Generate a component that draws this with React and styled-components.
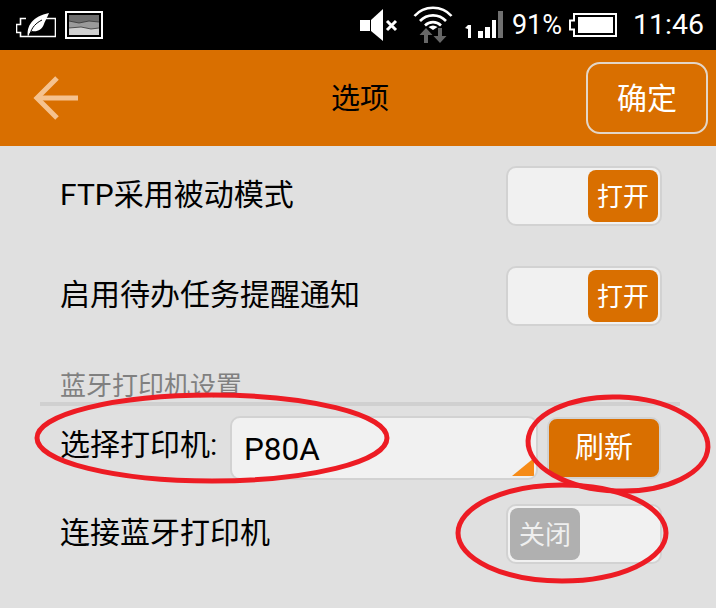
import styled, { createGlobalStyle } from "styled-components";

const GlobalStyle = createGlobalStyle`
  html, body {
    margin: 0;
    padding: 0;
    background: #e0e0e0;
  }
  * {
    box-sizing: border-box;
  }
`;

const ORANGE = "#d96f00";

const Page = styled.div`
  position: relative;
  width: 716px;
  height: 608px;
  overflow: hidden;
  background: #e0e0e0;
  font-family: Roboto, "Noto Sans CJK SC", sans-serif;
`;

const StatusBar = styled.div`
  display: flex;
  align-items: center;
  height: 50px;
  padding: 0 12px 0 16px;
  background: #000;
  color: #fff;
`;

const StatusLeft = styled.div`
  display: flex;
  align-items: center;
  gap: 9px;
  margin-right: auto;
`;

const StatusSlot = styled.div`
  display: flex;
  align-items: center;
  margin-left: ${(p) => p.$left}px;
`;

const StatusText = styled.span`
  font-size: ${(p) => p.$size}px;
  line-height: 50px;
  margin-left: ${(p) => p.$left}px;
`;

const Header = styled.header`
  display: grid;
  grid-template-columns: 1fr auto 1fr;
  align-items: center;
  height: 96px;
  padding: 0 8px;
  background: ${ORANGE};
`;

const BackSlot = styled.div`
  display: flex;
  margin-left: 25px;
`;

const HeaderTitle = styled.h1`
  margin: 0 0 4px 4px;
  font-size: 29px;
  font-weight: 400;
  color: #000;
`;

const ConfirmButton = styled.button`
  justify-self: end;
  width: 122px;
  height: 72px;
  padding: 0 0 4px;
  border: 2px solid #e3d6c8;
  border-radius: 14px;
  background: ${ORANGE};
  color: #fff;
  font: inherit;
  font-size: 30px;
`;

const Content = styled.main`
  padding: 20px 54px 0 60px;
`;

const Row = styled.div`
  display: flex;
  align-items: center;
  justify-content: space-between;
  height: 60px;
  margin-bottom: ${(p) => p.$gap || 0}px;
`;

const Label = styled.span`
  margin-top: -8px;
  font-size: 30px;
  color: #000;
  white-space: nowrap;
`;

const Toggle = styled.div`
  display: flex;
  justify-content: ${(p) => (p.$on ? "flex-end" : "flex-start")};
  width: 156px;
  height: 60px;
  padding: 2px;
  border: 2px solid #d2d2d2;
  border-radius: 10px;
  background: #f1f1f1;
`;

const Knob = styled.div`
  display: flex;
  align-items: center;
  justify-content: center;
  width: 70px;
  height: 52px;
  padding-bottom: 3px;
  border-radius: 8px;
  background: ${(p) => (p.$on ? ORANGE : "#b0b0b0")};
  color: ${(p) => (p.$on ? "#fff" : "#efefef")};
  font-size: 26px;
`;

const Section = styled.div`
  margin: 40px -18px 0 -20px;
  padding: 0 0 0 20px;
  height: 40px;
  border-bottom: 4px solid #d0d0d0;
  color: #808080;
  font-size: 26px;
  line-height: 41px;
`;

const PrinterRow = styled.div`
  display: flex;
  align-items: center;
  height: 64px;
  margin: 10px 0 24px;
`;

const PrinterLabel = styled(Label)`
  width: 170px;
  margin-top: -12px;
`;

const Select = styled.div`
  position: relative;
  display: flex;
  align-items: center;
  width: 308px;
  height: 64px;
  padding: 2px 0 0 12px;
  border: 2px solid #d2d2d2;
  border-radius: 10px;
  background: #f1f1f1;
  color: #000;
  font-size: 31.5px;
  overflow: hidden;
`;

const SelectCorner = styled.span`
  position: absolute;
  right: 2px;
  bottom: 2px;
  width: 0;
  height: 0;
  border-style: solid;
  border-width: 0 0 18px 22px;
  border-color: transparent transparent #f68b17 transparent;
`;

const RefreshButton = styled.button`
  width: 114px;
  height: 62px;
  margin-left: 9px;
  padding: 0 0 6px;
  border: 2px solid #d2d2d2;
  border-radius: 10px;
  background: ${ORANGE};
  color: #fff;
  font: inherit;
  font-size: 29px;
`;

const Annotations = styled.svg`
  position: absolute;
  inset: 0;
  pointer-events: none;
`;

const CellIcon = () => (
  <svg width="40" height="25" viewBox="0 0 40 25">
    <path d="M4.500 11.500h-4v8h4v4h35v-18h-35z" fill="none" stroke="#fff" strokeWidth="1.600" />
    <path d="M10 2h18v7H10z" fill="#000" />
    <path d="M12 24c-2-11 5-21 21-24-2 5-3 6-5 11-2 6-7 8-12 7-2 1-3 3-4 6z" fill="#fff" />
    <path d="M14 21c2-7 6-11 12-14" fill="none" stroke="#000" strokeWidth="1" />
  </svg>
);

const PictureIcon = () => (
  <svg width="38" height="28" viewBox="0 0 38 28">
    <rect x="1" y="1" width="36" height="26" fill="#000" stroke="#fff" strokeWidth="2" />
    <rect x="4" y="4" width="30" height="20" fill="#6e6e6e" />
    <path d="M4 10l10 2 10-2 10 1v13H4z" fill="#9a9a9a" />
    <path d="M4 17l12-1 10 2 8-1v7H4z" fill="#cfcfcf" />
    <path d="M4 10l10 2 10-2 10 1M4 17l12-1 10 2 8-1" fill="none" stroke="#333" strokeWidth=".8" />
  </svg>
);

const MuteIcon = () => (
  <svg width="40" height="32" viewBox="0 0 40 32">
    <path d="M1 11h10v11H1z" fill="#fff" />
    <path d="M12 11L24 0v32L12 22z" fill="#fff" />
    <path d="M28 12l9 9M37 12l-9 9" stroke="#fff" strokeWidth="3" />
  </svg>
);

const WifiIcon = () => (
  <svg width="40" height="38" viewBox="0 0 40 38">
    <g fill="none" stroke="#fff" strokeWidth="2.600">
      <path d="M1.500 10C11-1 29-1 38.500 10" />
      <path d="M7 15C14 7.500 26 7.500 33 15" />
      <path d="M12 19.500c4.500-4.500 11.500-4.500 16 0" />
    </g>
    <path d="M20 24l-4.500-3c3-2 6-2 9 0z" fill="#fff" />
    <path d="M13 22l-6.500 7H11v8h4v-8h4.500z" fill="#666" />
    <path d="M27 37l6.500-7H29v-8h-4v8h-4.500z" fill="#666" />
  </svg>
);

const SignalIcon = () => (
  <svg width="38" height="28" viewBox="0 0 38 28">
    <path d="M0 17l3-3h3v13H3V18z" fill="#fff" />
    <rect x="13" y="20" width="5" height="7" fill="#fff" />
    <rect x="20" y="16" width="5" height="11" fill="#fff" />
    <rect x="27" y="9" width="4" height="18" fill="#fff" />
    <rect x="33" y="0" width="5" height="27" fill="#707070" />
  </svg>
);

const BatteryIcon = () => (
  <svg width="48" height="24" viewBox="0 0 48 24">
    <path d="M1 7.500h4V1h42v22H5v-6.500H1z" fill="none" stroke="#fff" strokeWidth="2" />
    <rect x="9" y="4" width="35" height="16" fill="#fff" />
  </svg>
);

const BackIcon = () => (
  <svg width="46" height="44" viewBox="0 0 46 44" fill="none" stroke="#f5c28f" strokeWidth="5">
    <path d="M45 22H4" />
    <path d="M24 2L4 22l20 20" />
  </svg>
);

const App = () => {
  return (
    <Page>
      <GlobalStyle />
      <StatusBar>
        <StatusLeft>
          <CellIcon />
          <PictureIcon />
        </StatusLeft>
        <StatusSlot $left={0}>
          <MuteIcon />
        </StatusSlot>
        <StatusSlot $left={14}>
          <WifiIcon />
        </StatusSlot>
        <StatusSlot $left={12}>
          <SignalIcon />
        </StatusSlot>
        <StatusText $size={27} $left={9}>91%</StatusText>
        <StatusSlot $left={7}>
          <BatteryIcon />
        </StatusSlot>
        <StatusText $size={28.5} $left={16}>11:46</StatusText>
      </StatusBar>

      <Header>
        <BackSlot>
          <BackIcon />
        </BackSlot>
        <HeaderTitle>选项</HeaderTitle>
        <ConfirmButton>确定</ConfirmButton>
      </Header>

      <Content>
        <Row $gap={40}>
          <Label>FTP采用被动模式</Label>
          <Toggle $on>
            <Knob $on>打开</Knob>
          </Toggle>
        </Row>
        <Row>
          <Label>启用待办任务提醒通知</Label>
          <Toggle $on>
            <Knob $on>打开</Knob>
          </Toggle>
        </Row>

        <Section>蓝牙打印机设置</Section>

        <PrinterRow>
          <PrinterLabel>选择打印机:</PrinterLabel>
          <Select>
            P80A
            <SelectCorner />
          </Select>
          <RefreshButton>刷新</RefreshButton>
        </PrinterRow>

        <Row>
          <Label>连接蓝牙打印机</Label>
          <Toggle>
            <Knob>关闭</Knob>
          </Toggle>
        </Row>
      </Content>

      <Annotations width="716" height="608" viewBox="0 0 716 608" fill="none" stroke="#ed1c24" strokeWidth="5">
        <ellipse cx="212" cy="438" rx="175" ry="43" />
        <ellipse cx="618" cy="444" rx="90" ry="47" transform="rotate(2 618 444)" />
        <ellipse cx="562" cy="533" rx="104" ry="48" />
      </Annotations>
    </Page>
  );
};

export default App;
